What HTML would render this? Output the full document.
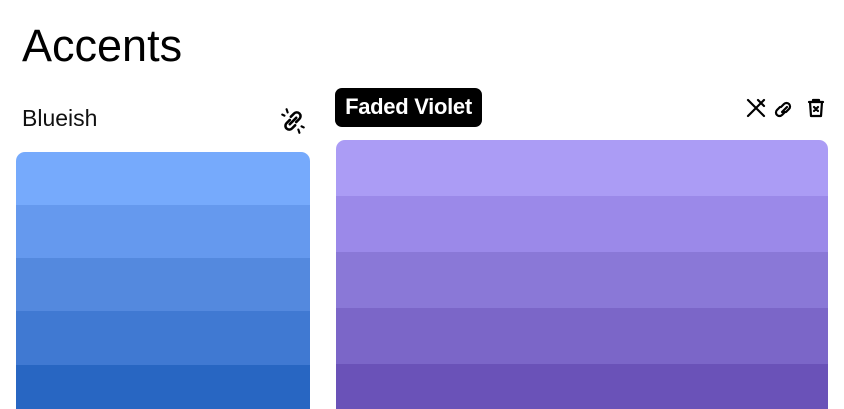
<!DOCTYPE html>
<html><head><style>
body{margin:0;width:844px;height:409px;overflow:hidden;background:#fff;font-family:"Liberation Sans",sans-serif;position:relative}
.a{position:absolute}
h1{position:absolute;left:22px;top:20px;margin:0;font-size:45px;font-weight:500;letter-spacing:0px;color:#000}
.card{position:absolute;border-radius:9px 9px 0 0;overflow:hidden}
.card div{width:100%}
</style></head><body>
<h1>Accents</h1>
<div class="a" style="left:22px;top:105px;font-size:23px;color:#111">Blueish</div>
<svg class="a" style="left:278px;top:106px" width="30" height="30" viewBox="0 0 28 28" fill="none" stroke="#000" stroke-width="2.4" stroke-linecap="round">
<path d="M12 10l3-3a3.5 3.5 0 015 5l-3 3M16 18l-3 3a3.5 3.5 0 01-5-5l3-3M11 17l6-6"/>
<path d="M6 9l-2-1M9 6L8 3M22 19l2 1M19 22l1 3" stroke-width="2"/></svg>
<div class="card" style="left:16px;top:152px;width:294px;height:257px">
<div style="height:53px;background:#76aafc"></div>
<div style="height:53px;background:#6599ee"></div>
<div style="height:53px;background:#5489de"></div>
<div style="height:54px;background:#4079d2"></div>
<div style="height:44px;background:#2866c2"></div>
</div>
<div class="a" style="left:335px;top:88px;width:147px;height:39px;background:#000;border-radius:7px;color:#fff;font-size:22px;font-weight:bold;line-height:38px;text-align:center;letter-spacing:-0.3px">Faded Violet</div>
<svg class="a" style="left:744px;top:95px" width="86" height="26" viewBox="0 0 86 24" fill="none" stroke="#000" stroke-width="2.2" stroke-linecap="round" stroke-linejoin="round">
<path d="M4 4l16 16M20 4L4 20M14 4l2 2M18 8l2 2"/>
<path d="M37 11l3-3a3 3 0 015 5l-3 3M41 16l-3 3a3 3 0 01-5-5l3-3M38 16l5-5"/>
<path d="M65 6h14M69 6V4h6v2M66 6l1 14h10l1-14M70 11l4 4M74 11l-4 4"/></svg>
<div class="card" style="left:336px;top:140px;width:492px;height:269px">
<div style="height:56px;background:#ab9cf5"></div>
<div style="height:56px;background:#9b89e9"></div>
<div style="height:56px;background:#8a78d7"></div>
<div style="height:56px;background:#7b66c8"></div>
<div style="height:45px;background:#6a52b8"></div>
</div>
</body></html>
